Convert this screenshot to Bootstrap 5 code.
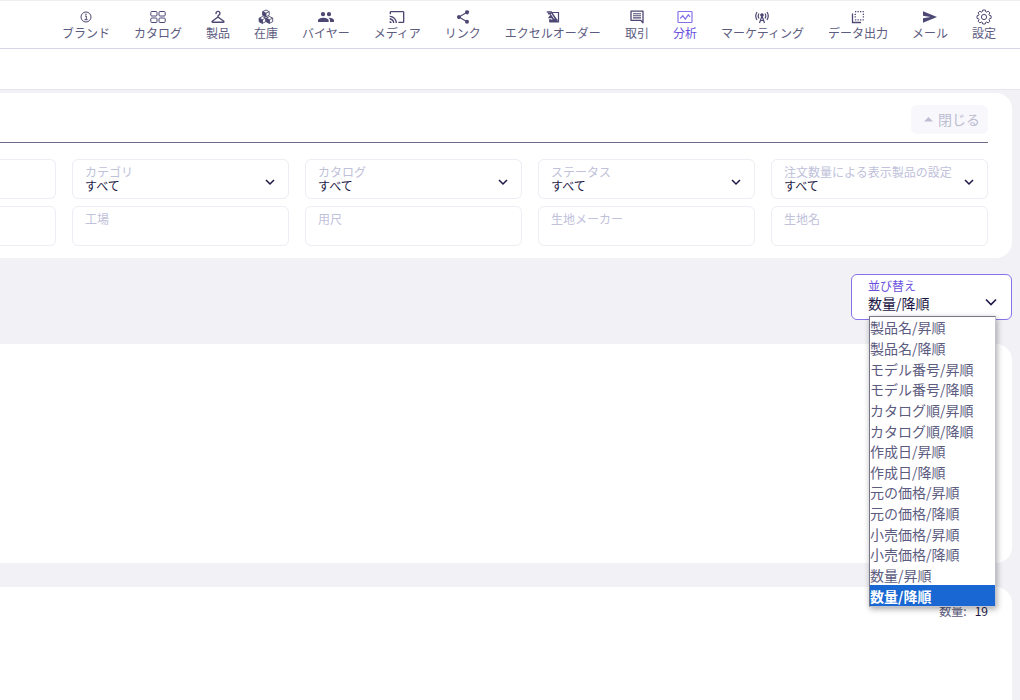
<!DOCTYPE html>
<html lang="ja">
<head>
<meta charset="utf-8">
<meta name="viewport" content="width=device-width, initial-scale=1">
<title>分析</title>
<link href="https://cdn.jsdelivr.net/npm/bootstrap@5.3.0/dist/css/bootstrap.min.css" rel="stylesheet">
<style>
  :root { --ink: #5c5b80; --deep: #1c1746; --accent: #6a4fe0; --faint: #c0c1da; --line: #ededf4; }
  body { font-family: "Noto Sans CJK JP", sans-serif; font-size: 12px; line-height: 16px; color: var(--ink); background: #f2f1f6; min-height: 100vh; }
  svg { display: block; }
  .topnav { border-top: 1px solid #eeeef0; border-bottom: 1px solid #d6d6e6; padding: 8px 24px 7px; }
  .topnav .nav-link { padding: 0; color: var(--ink); white-space: nowrap; }
  .topnav .nav-link.active { color: var(--accent); }
  .topnav .nav-link svg { width: 16px; height: 16px; color: #4c4873; }
  .topnav .nav-link.active svg { color: #8572ea; }
  .subbar { height: 41px; border-bottom: 1px solid #e6e6ee; }
  .content { padding: 3px 8px 0 0; }
  .panel { background: #fff; border-radius: 0 16px 16px 0; }
  .panel.open-end { border-bottom-right-radius: 0; }
  .filter-panel { padding-bottom: 12px; }
  .filter-head { padding: 12px 0 8px; border-bottom: 1px solid #6e6a8a; margin-bottom: 16px; }
  .toggle-btn { background: #f8f8fc; color: #bcbcd2; font-size: 14px; line-height: 20px; padding: 4px 8px 5px 12px; border: 0; border-radius: 6px; }
  .filters { display: grid; grid-template-columns: 56px repeat(4, minmax(0, 1fr)); column-gap: 16px; row-gap: 7px; }
  .field { height: 40px; border: 1px solid var(--line); border-radius: 6px; padding: 5px 12px; }
  .field.cut { border-left: 0; border-radius: 0 6px 6px 0; }
  .field label { color: var(--faint); font-size: 12px; line-height: 14px; white-space: nowrap; }
  .field select, .field input { appearance: none; background: none; border: 0; outline: 0; padding: 0; width: 100%; height: 14px; font-size: 12px; line-height: 14px; color: var(--deep); }
  .chev { position: absolute; right: 13px; top: 17px; width: 10px; height: 10px; color: var(--deep); pointer-events: none; }
  .sort { width: 161px; height: 46px; border: 1px solid #8673ea; border-radius: 6px; background: #fff; padding: 3px 16px; }
  .sort label { color: var(--accent); font-size: 12px; line-height: 16px; }
  .sort select { appearance: none; background: none; border: 0; outline: 0; padding: 0; width: 100%; height: 18px; font-size: 14px; line-height: 18px; color: var(--deep); }
  .sort .chev { width: 14px; height: 14px; top: 20px; }
  .options { position: absolute; z-index: 5; top: 41px; left: 17px; width: 127px; height: 291px; background: #fff; border: 1px solid #77778a; border-right-color: #c4c4cc; border-bottom-color: #c4c4cc; box-shadow: 1px 2px 6px rgba(0,0,0,.35); font-size: 14px; line-height: 20px; }
  .options li { flex: 1 1 0; display: flex; align-items: center; white-space: nowrap; min-height: 0; }
  .options li.chosen { background: #1967d2; color: #fff; font-weight: 700; }
  .total { padding: 16px 24px; }
  .total b { font-weight: 400; color: var(--deep); }
</style>
</head>
<body class="d-flex flex-column">
<header class="bg-white">
  <nav class="topnav">
    <ul class="nav flex-nowrap justify-content-end gap-4">
      <li><a class="nav-link d-flex flex-column align-items-center" href="#"><svg viewBox="0 0 16 16" fill="none" stroke="currentColor"><circle cx="8" cy="8" r="5"/><path d="M7 7h1.300v3.500M6.500 10.700h3.200"/><circle cx="8" cy="5.200" r=".5" fill="currentColor" stroke-width=".4"/></svg>ブランド</a></li>
      <li><a class="nav-link d-flex flex-column align-items-center" href="#"><svg viewBox="0 0 16 16" fill="none" stroke="currentColor"><rect x=".8" y="2.500" width="6.200" height="4.500" rx="1"/><rect x="9" y="2.500" width="6.200" height="4.500" rx="1"/><rect x=".8" y="9" width="6.200" height="4.500" rx="1"/><rect x="9" y="9" width="6.200" height="4.500" rx="1"/></svg>カタログ</a></li>
      <li><a class="nav-link d-flex flex-column align-items-center" href="#"><svg viewBox="0 0 16 16" fill="none" stroke="currentColor" stroke-width="1.400" stroke-linejoin="round" stroke-linecap="round"><path d="M6 4.500a2 2 0 1 1 2.800 1.700q-.8.4-.8 1.300v.5L2.200 12.200q-.5 1 .6 1.100h10.400q1.100-.1.600-1.100L8 8"/></svg>製品</a></li>
      <li><a class="nav-link d-flex flex-column align-items-center" href="#"><svg viewBox="0 0 16 16" stroke="currentColor" stroke-width=".9" stroke-linejoin="round"><g><path d="M8 1l3.200 1.600v3.600L8 7.800 4.800 6.200V2.600z" fill="#fff"/><path d="M4.800 2.600L8 4.200v3.600L4.800 6.200z" fill="currentColor"/><path d="M8 4.200l3.200-1.600" fill="none"/></g><g transform="translate(-3.500 6.500)"><path d="M8 1l3.200 1.600v3.600L8 7.800 4.800 6.200V2.600z" fill="#fff"/><path d="M4.800 2.600L8 4.200v3.600L4.800 6.200z" fill="currentColor"/><path d="M8 4.200l3.200-1.600" fill="none"/></g><g transform="translate(3.500 6.500)"><path d="M8 1l3.200 1.600v3.600L8 7.800 4.800 6.200V2.600z" fill="#fff"/><path d="M4.800 2.600L8 4.200v3.600L4.800 6.200z" fill="currentColor"/><path d="M8 4.200l3.200-1.600" fill="none"/></g></svg>在庫</a></li>
      <li><a class="nav-link d-flex flex-column align-items-center" href="#"><svg viewBox="0 0 24 24" fill="currentColor"><path d="M16.500 11a3.200 3.200 0 1 0 0-6.400 3.200 3.200 0 0 0 0 6.400zM7.500 11a3.200 3.200 0 1 0 0-6.400 3.200 3.200 0 0 0 0 6.400zM8 13c-2.700 0-8 1.300-8 4v2.500h16V17c0-2.700-5.300-4-8-4zm8.500 0h-1c1.300.9 2.500 2.200 2.500 4v2.500h6V17c0-2.700-4.800-4-7.500-4z"/></svg>バイヤー</a></li>
      <li><a class="nav-link d-flex flex-column align-items-center" href="#"><svg viewBox="0 0 24 24" fill="currentColor"><path d="M21 3H3c-1.100 0-2 .9-2 2v3h2V5h18v14h-7v2h7c1.100 0 2-.9 2-2V5c0-1.100-.9-2-2-2zM1 18v3h3c0-1.700-1.300-3-3-3zm0-4v2c2.800 0 5 2.200 5 5h2c0-3.900-3.100-7-7-7zm0-4v2a9 9 0 0 1 9 9h2c0-6.100-4.900-11-11-11z"/></svg>メディア</a></li>
      <li><a class="nav-link d-flex flex-column align-items-center" href="#"><svg viewBox="0 0 24 24" fill="currentColor"><path d="M18 16.100c-.8 0-1.400.3-2 .8l-7.100-4.200a3 3 0 0 0 0-1.400L16 7.200A3 3 0 1 0 15 5l.1.700L8 9.800a3 3 0 1 0 0 4.400l7.100 4.200-.1.600a3 3 0 1 0 3-2.900z"/></svg>リンク</a></li>
      <li><a class="nav-link d-flex flex-column align-items-center" href="#"><svg viewBox="0 0 16 16" fill="none" stroke="currentColor" stroke-width="1.200"><path d="M7 3.500h6.500v9.300H5V10"/><path d="M1.800 3h4.400l5 7.500H8.500L5.800 6.500 4.300 8.500h2.200M3 4.800h3" stroke-width="1.500"/><path d="M5 11h7v1.500H5z" fill="currentColor"/></svg>エクセルオーダー</a></li>
      <li><a class="nav-link d-flex flex-column align-items-center" href="#"><svg viewBox="0 0 16 16" fill="none" stroke="currentColor" stroke-width="1.300"><path d="M2 2.200h12v11.600L11.700 11.300H2z" stroke-linejoin="round"/><path d="M4 4.700h8M4 6.800h8M4 8.900h8" stroke-width="1.100"/></svg>取引</a></li>
      <li><a class="nav-link active d-flex flex-column align-items-center" href="#" aria-current="page"><svg viewBox="0 0 16 16" fill="none" stroke="currentColor" stroke-width="1.200"><rect x="1" y="2.500" width="14" height="11" rx=".8"/><path d="M3.200 9.500l2.600-2.700 2.500 3.400 3-4.400 1.800 2"/></svg>分析</a></li>
      <li><a class="nav-link d-flex flex-column align-items-center" href="#"><svg viewBox="0 0 16 16" fill="none" stroke="currentColor" stroke-width="1.200"><path d="M3 3q-2.500 4 0 8M5 4.500q-1.600 2.500 0 5M13 3q2.500 4 0 8M11 4.500q1.600 2.500 0 5"/><path d="M8 7l-2.500 7M8 7l2.500 7M6.500 11.500h3"/><circle cx="8" cy="6" r="1.200" fill="currentColor"/></svg>マーケティング</a></li>
      <li><a class="nav-link d-flex flex-column align-items-center" href="#"><svg viewBox="0 0 16 16" fill="none" stroke="currentColor" stroke-width="1.300"><path d="M2.500 4.500v9H11"/><path d="M5 2.700h9M5 10.800h9M5.200 4.700v5M13.400 4.700v5" stroke-dasharray="1.300 1.200"/></svg>データ出力</a></li>
      <li><a class="nav-link d-flex flex-column align-items-center" href="#"><svg viewBox="0 0 16 16" fill="currentColor"><path d="M1 2.300L15 8 1 13.700V9.300L8.500 8 1 6.700z"/></svg>メール</a></li>
      <li><a class="nav-link d-flex flex-column align-items-center" href="#"><svg viewBox="0 0 16 16" fill="none" stroke="currentColor" stroke-linejoin="round"><path d="M6.700 1h2.600l.4 1.700 1 .4 1.500-.9 1.700 1.700-.9 1.500.4 1 1.700.4v2.500l-1.700.4-.4 1 .9 1.500-1.700 1.700-1.500-.9-1 .4-.4 1.600H6.700l-.4-1.600-1-.4-1.500.9-1.700-1.700.9-1.500-.4-1L1 9.300V6.800l1.600-.4.4-1-.9-1.500 1.700-1.700 1.500.9 1-.4z"/><circle cx="8" cy="8" r="2.600"/></svg>設定</a></li>
    </ul>
  </nav>
  <div class="subbar"></div>
</header>

<main class="content flex-grow-1 d-flex flex-column">
  <section class="panel filter-panel">
    <div class="me-4">
      <div class="filter-head d-flex justify-content-end">
        <button type="button" class="toggle-btn d-flex align-items-center gap-1"><svg width="11" height="6" viewBox="0 0 11 6" fill="currentColor"><path d="M1 5.500L5.500 1 10 5.500z"/></svg>閉じる</button>
      </div>
      <form class="filters">
        <div class="field cut"></div>
        <div class="field position-relative d-flex flex-column"><label for="category">カテゴリ</label><select id="category"><option>すべて</option></select><svg class="chev" viewBox="0 0 10 10" fill="none" stroke="currentColor" stroke-width="1.500"><path d="M1 3l4 4 4-4"/></svg></div>
        <div class="field position-relative d-flex flex-column"><label for="catalog">カタログ</label><select id="catalog"><option>すべて</option></select><svg class="chev" viewBox="0 0 10 10" fill="none" stroke="currentColor" stroke-width="1.500"><path d="M1 3l4 4 4-4"/></svg></div>
        <div class="field position-relative d-flex flex-column"><label for="status">ステータス</label><select id="status"><option>すべて</option></select><svg class="chev" viewBox="0 0 10 10" fill="none" stroke="currentColor" stroke-width="1.500"><path d="M1 3l4 4 4-4"/></svg></div>
        <div class="field position-relative d-flex flex-column"><label for="byqty">注文数量による表示製品の設定</label><select id="byqty"><option>すべて</option></select><svg class="chev" viewBox="0 0 10 10" fill="none" stroke="currentColor" stroke-width="1.500"><path d="M1 3l4 4 4-4"/></svg></div>
        <div class="field cut"></div>
        <div class="field d-flex flex-column"><label for="factory">工場</label><input id="factory" type="text"></div>
        <div class="field d-flex flex-column"><label for="usage">用尺</label><input id="usage" type="text"></div>
        <div class="field d-flex flex-column"><label for="maker">生地メーカー</label><input id="maker" type="text"></div>
        <div class="field d-flex flex-column"><label for="fabric">生地名</label><input id="fabric" type="text"></div>
      </form>
    </div>
  </section>

  <div class="d-flex justify-content-end py-3">
    <div class="sort position-relative d-flex flex-column mb-2">
      <label for="sort">並び替え</label>
      <select id="sort"><option>数量/降順</option></select>
      <svg class="chev" viewBox="0 0 14 14" fill="none" stroke="currentColor" stroke-width="1.600"><path d="M2 4.500l5 5 5-5"/></svg>
      <ul class="options list-unstyled d-flex flex-column mb-0" role="listbox" aria-label="並び替え">
        <li role="option">製品名/昇順</li>
        <li role="option">製品名/降順</li>
        <li role="option">モデル番号/昇順</li>
        <li role="option">モデル番号/降順</li>
        <li role="option">カタログ順/昇順</li>
        <li role="option">カタログ順/降順</li>
        <li role="option">作成日/昇順</li>
        <li role="option">作成日/降順</li>
        <li role="option">元の価格/昇順</li>
        <li role="option">元の価格/降順</li>
        <li role="option">小売価格/昇順</li>
        <li role="option">小売価格/降順</li>
        <li role="option">数量/昇順</li>
        <li role="option" class="chosen" aria-selected="true">数量/降順</li>
      </ul>
    </div>
  </div>

  <section class="panel mb-4" style="min-height:219px"></section>

  <section class="panel open-end flex-grow-1 total d-flex justify-content-end gap-2">
    <span>数量:</span><b>19</b>
  </section>
</main>
<script src="https://cdn.jsdelivr.net/npm/bootstrap@5.3.0/dist/js/bootstrap.bundle.min.js"></script>
</body>
</html>
